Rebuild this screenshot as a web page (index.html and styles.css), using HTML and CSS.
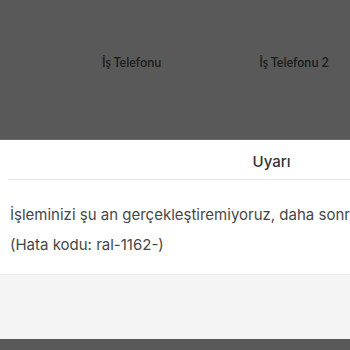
FILE: index.html
```html
<!DOCTYPE html>
<html lang="tr">
<head>
<meta charset="utf-8">
<link rel="stylesheet" href="styles.css">
</head>
<body>
<div class="backdrop-top">
  <span class="label label-1">İş Telefonu</span>
  <span class="label label-2">İş Telefonu 2</span>
</div>
<div class="modal">
  <div class="modal-header">Uyarı</div>
  <div class="divider"></div>
  <div class="modal-body">
    <p class="line">İşleminizi şu an gerçekleştiremiyoruz, daha sonra tekrar deneyiniz.</p>
    <p class="line">(Hata kodu: ral-1162-)</p>
  </div>
  <div class="modal-footer"></div>
</div>
<div class="backdrop-bottom"></div>
</body>
</html>
```

FILE: styles.css
```css
html, body {
  margin: 0;
  padding: 0;
  width: 350px;
  height: 350px;
  overflow: hidden;
  background: #595959;
}
.backdrop-top {
  height: 140px;
  display: flex;
  align-items: center;
  background: #595959;
  border-bottom: 1px solid #6a6a6a;
  box-sizing: border-box;
  padding-bottom: 15px;
}
.label {
  font-family: Lato, sans-serif;
  font-size: 12.5px;
  font-weight: 600;
  color: #1c1c1c;
  white-space: nowrap;
}
.label-1 { margin-left: 102px; }
.label-2 { margin-left: 98px; }
.modal {
  width: 543px;
  background: #ffffff;
  font-family: Inter, "Noto Sans", sans-serif;
}
.modal-header {
  height: 39px;
  display: flex;
  align-items: center;
  justify-content: center;
  padding-top: 4px;
  box-sizing: border-box;
  font-size: 15px;
  font-weight: 500;
  color: #333333;
}
.divider {
  height: 1px;
  margin-left: 8px;
  background: #e6e6e6;
}
.modal-body {
  padding: 20px 0 14px 10px;
  height: 94px;
  box-sizing: border-box;
  overflow: hidden;
}
.line {
  margin: 0;
  font-size: 15px;
  line-height: 30px;
  color: #474747;
  white-space: nowrap;
}
.modal-footer {
  height: 65px;
  background: #f4f4f4;
  border-top: 1px solid #ececec;
  box-sizing: border-box;
}
.backdrop-bottom {
  height: 11px;
  background: #595959;
}
```
